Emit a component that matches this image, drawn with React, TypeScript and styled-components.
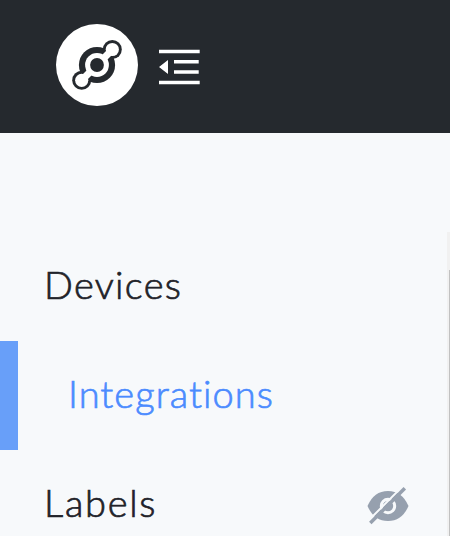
import React from "react";
import styled, { createGlobalStyle } from "styled-components";

const GlobalStyle = createGlobalStyle`
  * { box-sizing: border-box; }
  body { margin: 0; background: #f7f9fb; overflow: hidden; }
`;

const Page = styled.div`
  display: flex;
  flex-direction: column;
  height: 536px;
  overflow: hidden;
  background: #f7f9fb;
  font-family: Lato, "Open Sans", sans-serif;
`;

const Header = styled.header`
  display: flex;
  align-items: flex-start;
  gap: 21px;
  flex: none;
  height: 133px;
  padding: 24px 0 0 56px;
  background: #25292e;
`;

const Logo = styled.svg`
  display: block;
  width: 82px;
  height: 82px;
`;

const CollapseButton = styled.button`
  margin: 25px 0 0;
  padding: 0;
  border: 0;
  background: none;
  line-height: 0;
`;

const Body = styled.div`
  display: flex;
  flex: none;
  height: 403px;
  padding-top: 99px;
`;

const Nav = styled.nav`
  flex: 1;
  height: 304px;
  overflow: hidden;
`;

const Item = styled.a<{ $active?: boolean }>`
  display: flex;
  align-items: center;
  justify-content: space-between;
  height: 109px;
  padding: 0 38px 0 ${(p) => (p.$active ? 50 : 44)}px;
  border-left: ${(p) => (p.$active ? "18px solid #689ff9" : "0")};
  color: ${(p) => (p.$active ? "#4b8bff" : "#212229")};
`;

const Label = styled.span<{ $spacing: number }>`
  padding-bottom: 6px;
  font-size: 38px;
  font-weight: 300;
  letter-spacing: ${(p) => p.$spacing}px;
  line-height: 48px;
  -webkit-text-stroke: 0.7px currentColor;
`;

const EyeOff = styled.svg`
  width: 42px;
  height: 38px;
  margin-top: 2px;
`;

const Scrollbar = styled.div`
  flex: none;
  width: 3px;
  padding: 38px 0 0 2px;
  background: #f1f1f1;
`;

const Thumb = styled.div`
  height: 266px;
  background: #c1c1c1;
`;

export default function App() {
  return (
    <Page>
      <GlobalStyle />
      <Header>
        <Logo viewBox="0 0 82 82">
          <circle cx="41" cy="41" r="41" fill="#fff" />
          <circle cx="41" cy="41" r="18.1" fill="#25292e" />
          <circle cx="56.3" cy="25.5" r="9.5" fill="#25292e" />
          <circle cx="25.7" cy="56.3" r="9.5" fill="#25292e" />
          <circle cx="41" cy="41" r="11.9" fill="#fff" />
          <circle cx="56.3" cy="25.5" r="6.6" fill="#fff" />
          <circle cx="25.7" cy="56.3" r="6.6" fill="#fff" />
          <path d="M56 26 48 34M26 56l8-8" stroke="#fff" strokeWidth="7" />
          <circle cx="41" cy="41" r="6.9" fill="#25292e" />
        </Logo>
        <CollapseButton aria-label="Collapse menu">
          <svg width="41" height="36" viewBox="0 0 41 36" fill="#fff">
            <path d="M0 .7h40.7v3.6H0zM15 11h24.7v3.6H15zM15 21.2h24.7v3.6H15zM0 31.7h40.7v3.6H0zM9 11v14L0 18z" />
          </svg>
        </CollapseButton>
      </Header>
      <Body>
        <Nav>
          <Item>
            <Label $spacing={1.3}>Devices</Label>
          </Item>
          <Item $active>
            <Label $spacing={1.05}>Integrations</Label>
          </Item>
          <Item>
            <Label $spacing={1.7}>Labels</Label>
            <EyeOff viewBox="0 0 42 38">
              <path d="M.5 19Q7 4 21 4t20.5 15Q35 34 21 34T.5 19z" fill="#96a0ae" />
              <circle cx="21" cy="19" r="6.7" fill="none" stroke="#f7f9fb" strokeWidth="3" />
              <path d="M1 34 35 0" stroke="#f7f9fb" strokeWidth="2" />
              <path d="M3.3 36 37.8 1.3" stroke="#96a0ae" strokeWidth="3.5" />
            </EyeOff>
          </Item>
        </Nav>
        <Scrollbar>
          <Thumb />
        </Scrollbar>
      </Body>
    </Page>
  );
}
